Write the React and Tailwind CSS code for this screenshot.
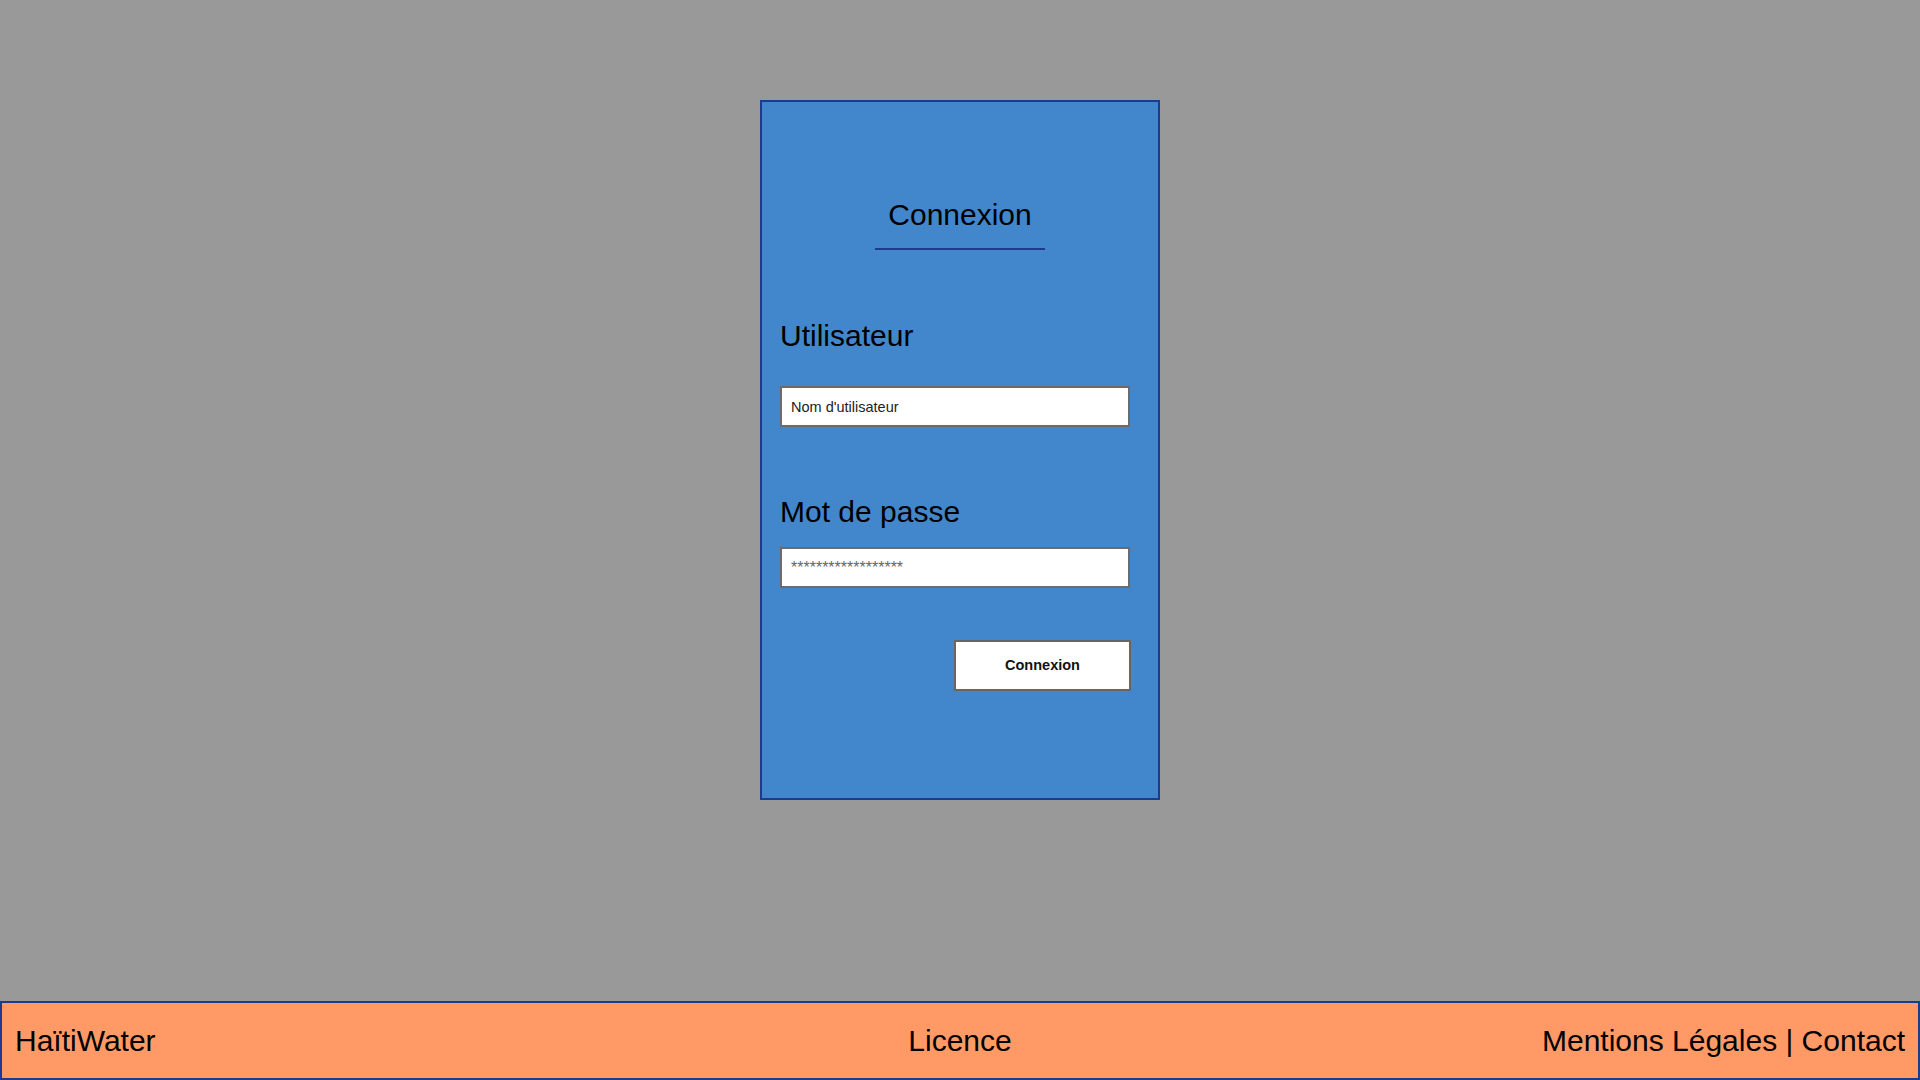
import React from "react";

const font = "font-['Liberation_Sans',Arial,sans-serif]";

function LoginCard() {
  return (
    <div className="w-[400px] h-[700px] mx-auto bg-[#4287cc] border-2 border-[#1d3a8c] pt-[96px] px-[18px]">
      <h1 className="text-[30px] leading-[34px] text-center text-black font-normal">Connexion</h1>
      <div className="mt-[16px] mx-auto w-[170px] h-[2px] bg-[#1d3a8c]" />

      <label className="block mt-[69px] text-[30px] leading-[34px] text-black">Utilisateur</label>
      <input
        type="text"
        placeholder="Nom d'utilisateur"
        className="block mt-[33px] w-[350px] h-[41px] bg-white border-2 border-[#6b6b6b] pl-[9px] text-[14.5px] text-[#222] placeholder:text-[#222] outline-none"
      />

      <label className="block mt-[68px] text-[30px] leading-[34px] text-black">Mot de passe</label>
      <input
        type="password"
        placeholder="******************"
        className="block mt-[18px] w-[350px] h-[41px] bg-white border-2 border-[#6b6b6b] pl-[9px] text-[16px] text-[#555] placeholder:text-[#666] outline-none"
      />

      <div className="w-[351px] flex justify-end mt-[52px]">
        <button className="w-[177px] h-[51px] bg-white border-2 border-[#666] text-[14.5px] font-bold text-[#111]">
          Connexion
        </button>
      </div>
    </div>
  );
}

function Footer() {
  return (
    <footer className="h-[79px] bg-[#ff9966] border-2 border-[#1d3a8c] px-[13px] grid grid-cols-3 items-center text-[30px] text-black">
      <span>HaïtiWater</span>
      <span className="text-center">Licence</span>
      <span className="text-right">Mentions Légales | Contact</span>
    </footer>
  );
}

export default function App() {
  return (
    <div className={`h-screen flex flex-col bg-[#999999] ${font}`}>
      <main className="flex-1 pt-[100px]">
        <LoginCard />
      </main>
      <Footer />
    </div>
  );
}
